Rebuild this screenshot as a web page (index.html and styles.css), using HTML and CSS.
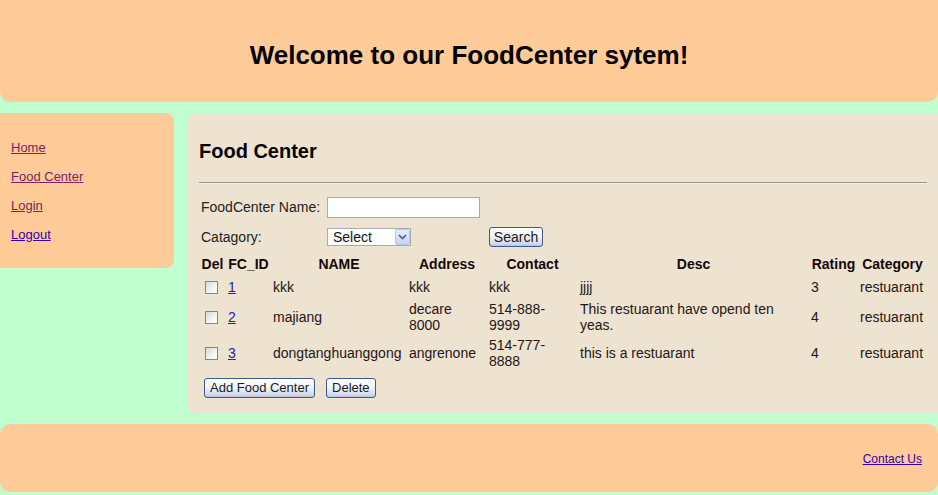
FILE: index.html
```html
<!DOCTYPE html>
<html>
<head>
<meta charset="utf-8">
<title>FoodCenter</title>
<link rel="stylesheet" href="styles.css">
</head>
<body>
<div class="page">
  <header class="header">
    <h1 class="title">Welcome to our FoodCenter sytem!</h1>
  </header>
  <div class="main">
    <nav class="sidebar">
      <a href="#" class="nav-link visited">Home</a>
      <a href="#" class="nav-link visited">Food Center</a>
      <a href="#" class="nav-link visited">Login</a>
      <a href="#" class="nav-link">Logout</a>
    </nav>
    <section class="content">
      <h2 class="heading">Food Center</h2>
      <hr class="rule">
      <form class="search">
        <label class="search-label">FoodCenter Name:</label>
        <input class="text-input" type="text">
        <span></span>
        <label class="search-label">Catagory:</label>
        <span class="select-wrap">
          <select class="select"><option>Select</option></select>
          <span class="select-arrow"><svg width="9" height="6" viewBox="0 0 9 6"><path d="M1 1 L4.5 4.5 L8 1" fill="none" stroke="#4d6185" stroke-width="1.6"/></svg></span>
        </span>
        <button type="button" class="btn">Search</button>
      </form>
      <table class="grid">
        <colgroup>
          <col class="c-del"><col class="c-id"><col class="c-name"><col class="c-addr"><col class="c-contact"><col class="c-desc"><col class="c-rating"><col class="c-cat">
        </colgroup>
        <thead>
          <tr class="head-row">
            <th>Del</th><th>FC_ID</th><th>NAME</th><th>Address</th><th>Contact</th><th>Desc</th><th>Rating</th><th>Category</th>
          </tr>
        </thead>
        <tbody>
          <tr class="row-single">
            <td><input type="checkbox" class="check"></td>
            <td><a href="#" class="id-link">1</a></td>
            <td>kkk</td>
            <td class="addr">kkk</td>
            <td class="contact">kkk</td>
            <td class="desc">jjjj</td>
            <td>3</td>
            <td>restuarant</td>
          </tr>
          <tr class="row-double">
            <td><input type="checkbox" class="check"></td>
            <td><a href="#" class="id-link">2</a></td>
            <td>majiang</td>
            <td class="addr">decare 8000</td>
            <td class="contact">514-888-9999</td>
            <td class="desc">This restuarant have opend ten yeas.</td>
            <td>4</td>
            <td>restuarant</td>
          </tr>
          <tr class="row-double">
            <td><input type="checkbox" class="check"></td>
            <td><a href="#" class="id-link">3</a></td>
            <td>dongtanghuanggong</td>
            <td class="addr">angrenone</td>
            <td class="contact">514-777-8888</td>
            <td class="desc">this is a restuarant</td>
            <td>4</td>
            <td>restuarant</td>
          </tr>
        </tbody>
      </table>
      <div class="actions">
        <button type="button" class="btn">Add Food Center</button>
        <button type="button" class="btn">Delete</button>
      </div>
    </section>
  </div>
  <footer class="footer">
    <a href="#" class="footer-link">Contact Us</a>
  </footer>
</div>
</body>
</html>
```
FILE: styles.css
```css
html, body {
  margin: 0;
  padding: 0;
}
body {
  background: #c0ffd0;
  font-family: "Liberation Sans", Arial, sans-serif;
  color: #111;
}
.page {
  width: 938px;
}
.header {
  background: #ffcc99;
  height: 102px;
  border-radius: 0 0 10px 10px;
  box-sizing: border-box;
  padding-top: 40px;
}
.title {
  margin: 0;
  font-size: 26px;
  line-height: 30px;
  font-weight: bold;
  text-align: center;
  color: #000;
}
.main {
  display: flex;
  align-items: flex-start;
  gap: 14px;
  margin-top: 11px;
}
.sidebar {
  width: 174px;
  flex: none;
  background: #ffcc99;
  border-radius: 0 8px 8px 0;
  box-sizing: border-box;
  padding: 27px 0 25px 11px;
  display: flex;
  flex-direction: column;
  align-items: flex-start;
  gap: 13px;
}
.nav-link {
  font-size: 13px;
  line-height: 16px;
  color: #3300aa;
}
.nav-link.visited {
  color: #80205f;
}
.content {
  flex: 1;
  background: #eee3d1;
  border-radius: 8px 0 0 8px;
  padding: 26px 11px 16px 11px;
  min-width: 0;
}
.heading {
  margin: 0;
  font-size: 20px;
  line-height: 24px;
  font-weight: bold;
  color: #000;
}
.rule {
  margin: 19px 0 0 0;
  height: 0;
  border: 0;
  border-top: 1px solid #9a9690;
  border-bottom: 1px solid #f6efe4;
}
.search {
  display: grid;
  grid-template-columns: 128px 162px auto;
  grid-template-rows: 26px 26px;
  row-gap: 4px;
  margin-top: 10px;
  align-items: center;
}
.search-label {
  font-size: 14px;
  line-height: 16px;
  padding-left: 2px;
  color: #222;
}
.text-input {
  width: 153px;
  height: 21px;
  box-sizing: border-box;
  border: 1px solid #a5acb5;
  background: #fff;
  margin: 0;
  padding: 0 2px;
}
.select-wrap {
  position: relative;
  width: 84px;
  height: 18px;
  display: block;
}
.select {
  appearance: none;
  -webkit-appearance: none;
  width: 84px;
  height: 18px;
  box-sizing: border-box;
  border: 1px solid #a5acb5;
  background: #fff;
  margin: 0;
  padding: 0 0 0 5px;
  font-family: "Liberation Sans", Arial, sans-serif;
  font-size: 14px;
  line-height: 16px;
  color: #111;
  border-radius: 0;
}
.select-arrow {
  position: absolute;
  right: 1px;
  top: 1px;
  width: 15px;
  height: 16px;
  box-sizing: border-box;
  border: 1px solid #b8c6e0;
  border-radius: 2px;
  background: linear-gradient(to bottom, #e4ecfb 0%, #c7d5f2 100%);
  display: flex;
  align-items: center;
  justify-content: center;
  pointer-events: none;
}
.btn {
  height: 20px;
  box-sizing: border-box;
  border: 1px solid #3b5b8c;
  border-radius: 3px;
  background: linear-gradient(to bottom, #ffffff 0%, #f2f4fa 45%, #d4dbed 85%, #b9c4df 100%);
  font-family: "Liberation Sans", Arial, sans-serif;
  font-size: 13px;
  line-height: 16px;
  color: #1a1a1a;
  padding: 0 5px;
  margin: 0;
  justify-self: start;
}
.search .btn {
  width: 54px;
  padding: 0;
  font-size: 14px;
}
.grid {
  border-collapse: collapse;
  table-layout: fixed;
  width: 728px;
  margin-top: 3px;
  font-size: 14px;
  line-height: 16px;
}
.c-del { width: 27px; }
.c-id { width: 45px; }
.c-name { width: 136px; }
.c-addr { width: 80px; }
.c-contact { width: 91px; }
.c-desc { width: 231px; }
.c-rating { width: 49px; }
.c-cat { width: 69px; }
.grid th {
  font-weight: bold;
  text-align: center;
  color: #140808;
  padding: 0 2px;
  white-space: nowrap;
}
.grid td {
  padding: 0 2px;
  vertical-align: middle;
  color: #241616;
}
.head-row { height: 22px; }
.row-single { height: 24px; }
.row-double { height: 36px; }
.grid td.addr { padding-right: 6px; }
.grid td.contact { padding-right: 10px; }
.grid td.desc { padding-right: 10px; }
.check {
  appearance: none;
  -webkit-appearance: none;
  width: 13px;
  height: 13px;
  margin: 0 0 0 4px;
  box-sizing: border-box;
  border: 1px solid #7d8790;
  background: linear-gradient(135deg, #d8d8d2 0%, #f4f4f0 60%, #ffffff 100%);
  display: block;
}
.id-link {
  color: #2222bb;
}
.actions {
  display: flex;
  gap: 11px;
  margin-top: 7px;
  padding-left: 5px;
}
.footer {
  background: #ffcc99;
  height: 68px;
  margin-top: 10px;
  border-radius: 10px;
  box-sizing: border-box;
  display: flex;
  justify-content: flex-end;
  align-items: center;
  padding: 2px 16px 0 0;
}
.footer-link {
  font-size: 12px;
  line-height: 16px;
  color: #3300aa;
}
```
